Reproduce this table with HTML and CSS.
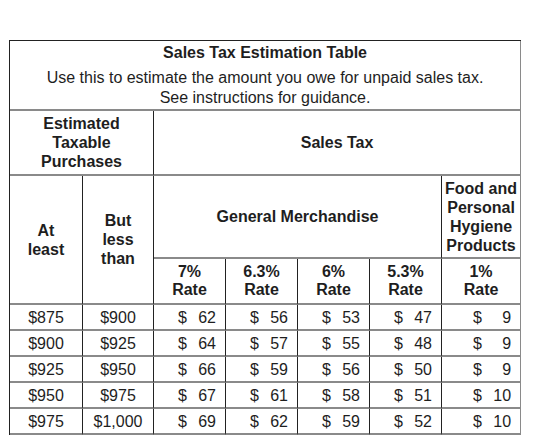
FILE: index.html
```html
<!DOCTYPE html>
<html lang="en">
<head>
    <meta charset="UTF-8">
    <title>Sales Tax Estimation Table</title>
    <link rel="stylesheet" href="styles.css">
</head>
<body>
    <div class="page">
        <table class="tax-table">
            <colgroup>
                <col class="c-low">
                <col class="c-high">
                <col class="c-rate">
                <col class="c-rate">
                <col class="c-rate">
                <col class="c-rate">
                <col class="c-food">
            </colgroup>
            <tr class="r-title">
                <td colspan="7" class="last">
                    <div class="title">Sales Tax Estimation Table</div>
                    <div class="subtitle">Use this to estimate the amount you owe for unpaid sales tax.<br>See instructions for guidance.</div>
                </td>
            </tr>
            <tr class="r-head1">
                <th colspan="2">Estimated<br>Taxable<br>Purchases</th>
                <th colspan="5" class="last">Sales Tax</th>
            </tr>
            <tr class="r-head2">
                <th rowspan="2">At<br>least</th>
                <th rowspan="2">But<br>less<br>than</th>
                <th colspan="4">General Merchandise</th>
                <th class="last">Food and<br>Personal<br>Hygiene<br>Products</th>
            </tr>
            <tr class="r-head3">
                <th>7%<br>Rate</th>
                <th>6.3%<br>Rate</th>
                <th>6%<br>Rate</th>
                <th>5.3%<br>Rate</th>
                <th class="last">1%<br>Rate</th>
            </tr>
            <tbody id="rows"></tbody>
        </table>
    </div>

    <script>
        // Rows of the estimation table
        const rows = [
            ['$875', '$900', 62, 56, 53, 47, 9],
            ['$900', '$925', 64, 57, 55, 48, 9],
            ['$925', '$950', 66, 59, 56, 50, 9],
            ['$950', '$975', 67, 61, 58, 51, 10],
            ['$975', '$1,000', 69, 62, 59, 52, 10]
        ];

        function money(value, last) {
            return `<td class="money${last ? ' last food' : ''}"><div class="amt"><span>$</span><span>${value}</span></div></td>`;
        }

        document.getElementById('rows').innerHTML = rows.map(r => `
            <tr class="r-data">
                <td>${r[0]}</td>
                <td>${r[1]}</td>
                ${r.slice(2).map((v, i) => money(v, i === 4)).join('')}
            </tr>
        `).join('');
    </script>
</body>
</html>
```

FILE: styles.css
```css
/* Basic Reset */
* {
    margin: 0;
    padding: 0;
    box-sizing: border-box;
}

body {
    font-family: 'Liberation Sans', Arial, sans-serif;
    background: #fff;
    color: #1e1e1e;
}

.page {
    padding: 40px 0 0 9px;
}

.tax-table {
    width: 512px;
    table-layout: fixed;
    border-collapse: separate;
    border-spacing: 0;
    border-top: 1px solid #222;
    border-left: 1px solid #222;
    font-size: 16px;
    line-height: 19px;
}

.c-low { width: 73px; }
.c-high { width: 71px; }
.c-rate { width: 72px; }
.c-food { width: 79px; }

td, th {
    border-right: 1px solid #222;
    border-bottom: 2px solid #8a8a8a;
    text-align: center;
    vertical-align: middle;
}

th {
    font-weight: bold;
}

td.last, th.last {
    border-right: 1px solid #8a8a8a;
}

/* Title */
.r-title td {
    height: 70px;
    padding-top: 1px;
}

.title {
    font-weight: bold;
    margin-bottom: 6px;
}

.subtitle {
    line-height: 20px;
}

.r-head1 th { height: 65px; }
.r-head2 th { height: 83px; }
.r-head3 th { height: 46px; line-height: 18px; }

.r-data td { height: 26px; }

.money {
    padding: 0 9px 0 24px;
}

.money.food {
    padding-left: 31px;
}

.amt {
    display: flex;
    justify-content: space-between;
}
```
